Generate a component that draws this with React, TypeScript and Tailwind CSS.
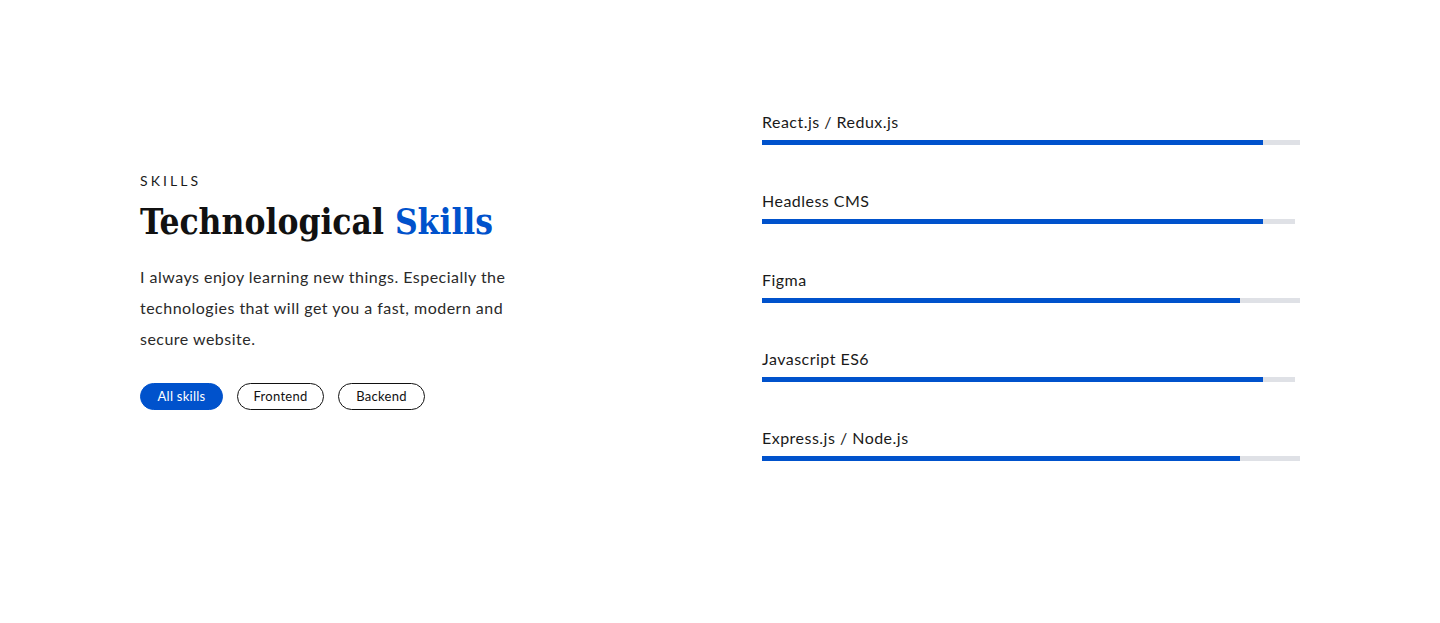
const skills = [
  { name: "React.js / Redux.js", level: 501, track: 538 },
  { name: "Headless CMS", level: 501, track: 533 },
  { name: "Figma", level: 478, track: 538 },
  { name: "Javascript ES6", level: 501, track: 533 },
  { name: "Express.js / Node.js", level: 478, track: 538 },
];

const body = { fontFamily: "Lato, 'Noto Sans', sans-serif" };

export default function App() {
  return (
    <section className="h-[623px] w-full bg-white" style={body}>
      <div className="mx-auto flex w-[1160px] items-start pt-[111px]">
        <div className="w-[622px] pt-[60px]">
          <p className="text-[14px] leading-[20px] tracking-[0.22em] text-[#1a1a1a]">SKILLS</p>
          <h2 className="mt-[7px] text-[35px] font-bold leading-[48px] text-[#111] [font-family:'DejaVu_Serif_Condensed','DejaVu_Serif',serif] [font-stretch:condensed]">
            Technological <span className="text-[#0052cc]">Skills</span>
          </h2>
          <p className="mt-[15px] w-[390px] text-[16px] leading-[31px] tracking-[0.03em] text-[#2a2a2a]">
            I always enjoy learning new things. Especially the technologies that will get you a fast,
            modern and secure website.
          </p>
          <div className="mt-[29px] flex gap-[14px]">
            <button className="h-[27px] w-[83px] rounded-full border border-[#0052cc] bg-[#0052cc] text-[13px] tracking-[0.02em] text-white">
              All skills
            </button>
            <button className="h-[27px] w-[87px] rounded-full border border-[#111] text-[13px] tracking-[0.02em] text-[#111]">
              Frontend
            </button>
            <button className="h-[27px] w-[87px] rounded-full border border-[#111] text-[13px] tracking-[0.02em] text-[#111]">
              Backend
            </button>
          </div>
        </div>
        <div className="flex w-[538px] flex-col gap-[45px]">
          {skills.map((s) => (
            <div key={s.name}>
              <p className="text-[16px] leading-[22px] tracking-[0.03em] text-[#1a1a1a]">{s.name}</p>
              <div className="mt-[7px] h-[5px] bg-[#dfe1e6]" style={{ width: s.track }}>
                <div className="h-full bg-[#0052cc]" style={{ width: s.level }} />
              </div>
            </div>
          ))}
        </div>
      </div>
    </section>
  );
}
